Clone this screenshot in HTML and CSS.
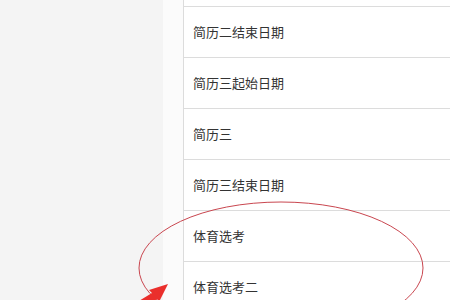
FILE: index.html
```html
<!DOCTYPE html>
<html>
<head>
    <meta charset="UTF-8" />
    <title>字段列表</title>
    <link rel="stylesheet" href="styles.css">
</head>
<body>
    <div class="page">
        <div class="side"></div>
        <div class="strip"></div>
        <div class="lista">
            <div class="linha"></div>
            <div class="linha">简历二结束日期</div>
            <div class="linha">简历三起始日期</div>
            <div class="linha">简历三</div>
            <div class="linha">简历三结束日期</div>
            <div class="linha">体育选考</div>
            <div class="linha">体育选考二</div>
        </div>
    </div>
    <svg class="marca" width="450" height="300" viewBox="0 0 450 300">
        <ellipse cx="281" cy="268" rx="142" ry="66" fill="none" stroke="#c9464f" stroke-width="1" />
        <polygon points="168,284 149,290 152,293 124,310 132,317 157,299 159,302" fill="#ea2f2c" />
    </svg>
</body>
</html>
```

FILE: styles.css
```css
body {
    margin: 0;
    background-color: white;
    font-family: "Noto Sans CJK SC", "Noto Sans", sans-serif;
}

.page {
    display: flex;
    height: 300px;
    overflow: hidden;
}

.side {
    width: 163px;
    background-color: #f4f4f4;
}

.strip {
    width: 20px;
    background-color: #fbfbfb;
    border-right: 1px solid #dcdcdc;
}

.lista {
    flex: 1;
    margin-top: -44px;
}

.linha {
    height: 50px;
    line-height: 50px;
    padding-left: 9px;
    font-size: 13px;
    color: #333;
    border-bottom: 1px solid #dcdcdc;
}

.marca {
    position: absolute;
    left: 0;
    top: 0;
}
```
